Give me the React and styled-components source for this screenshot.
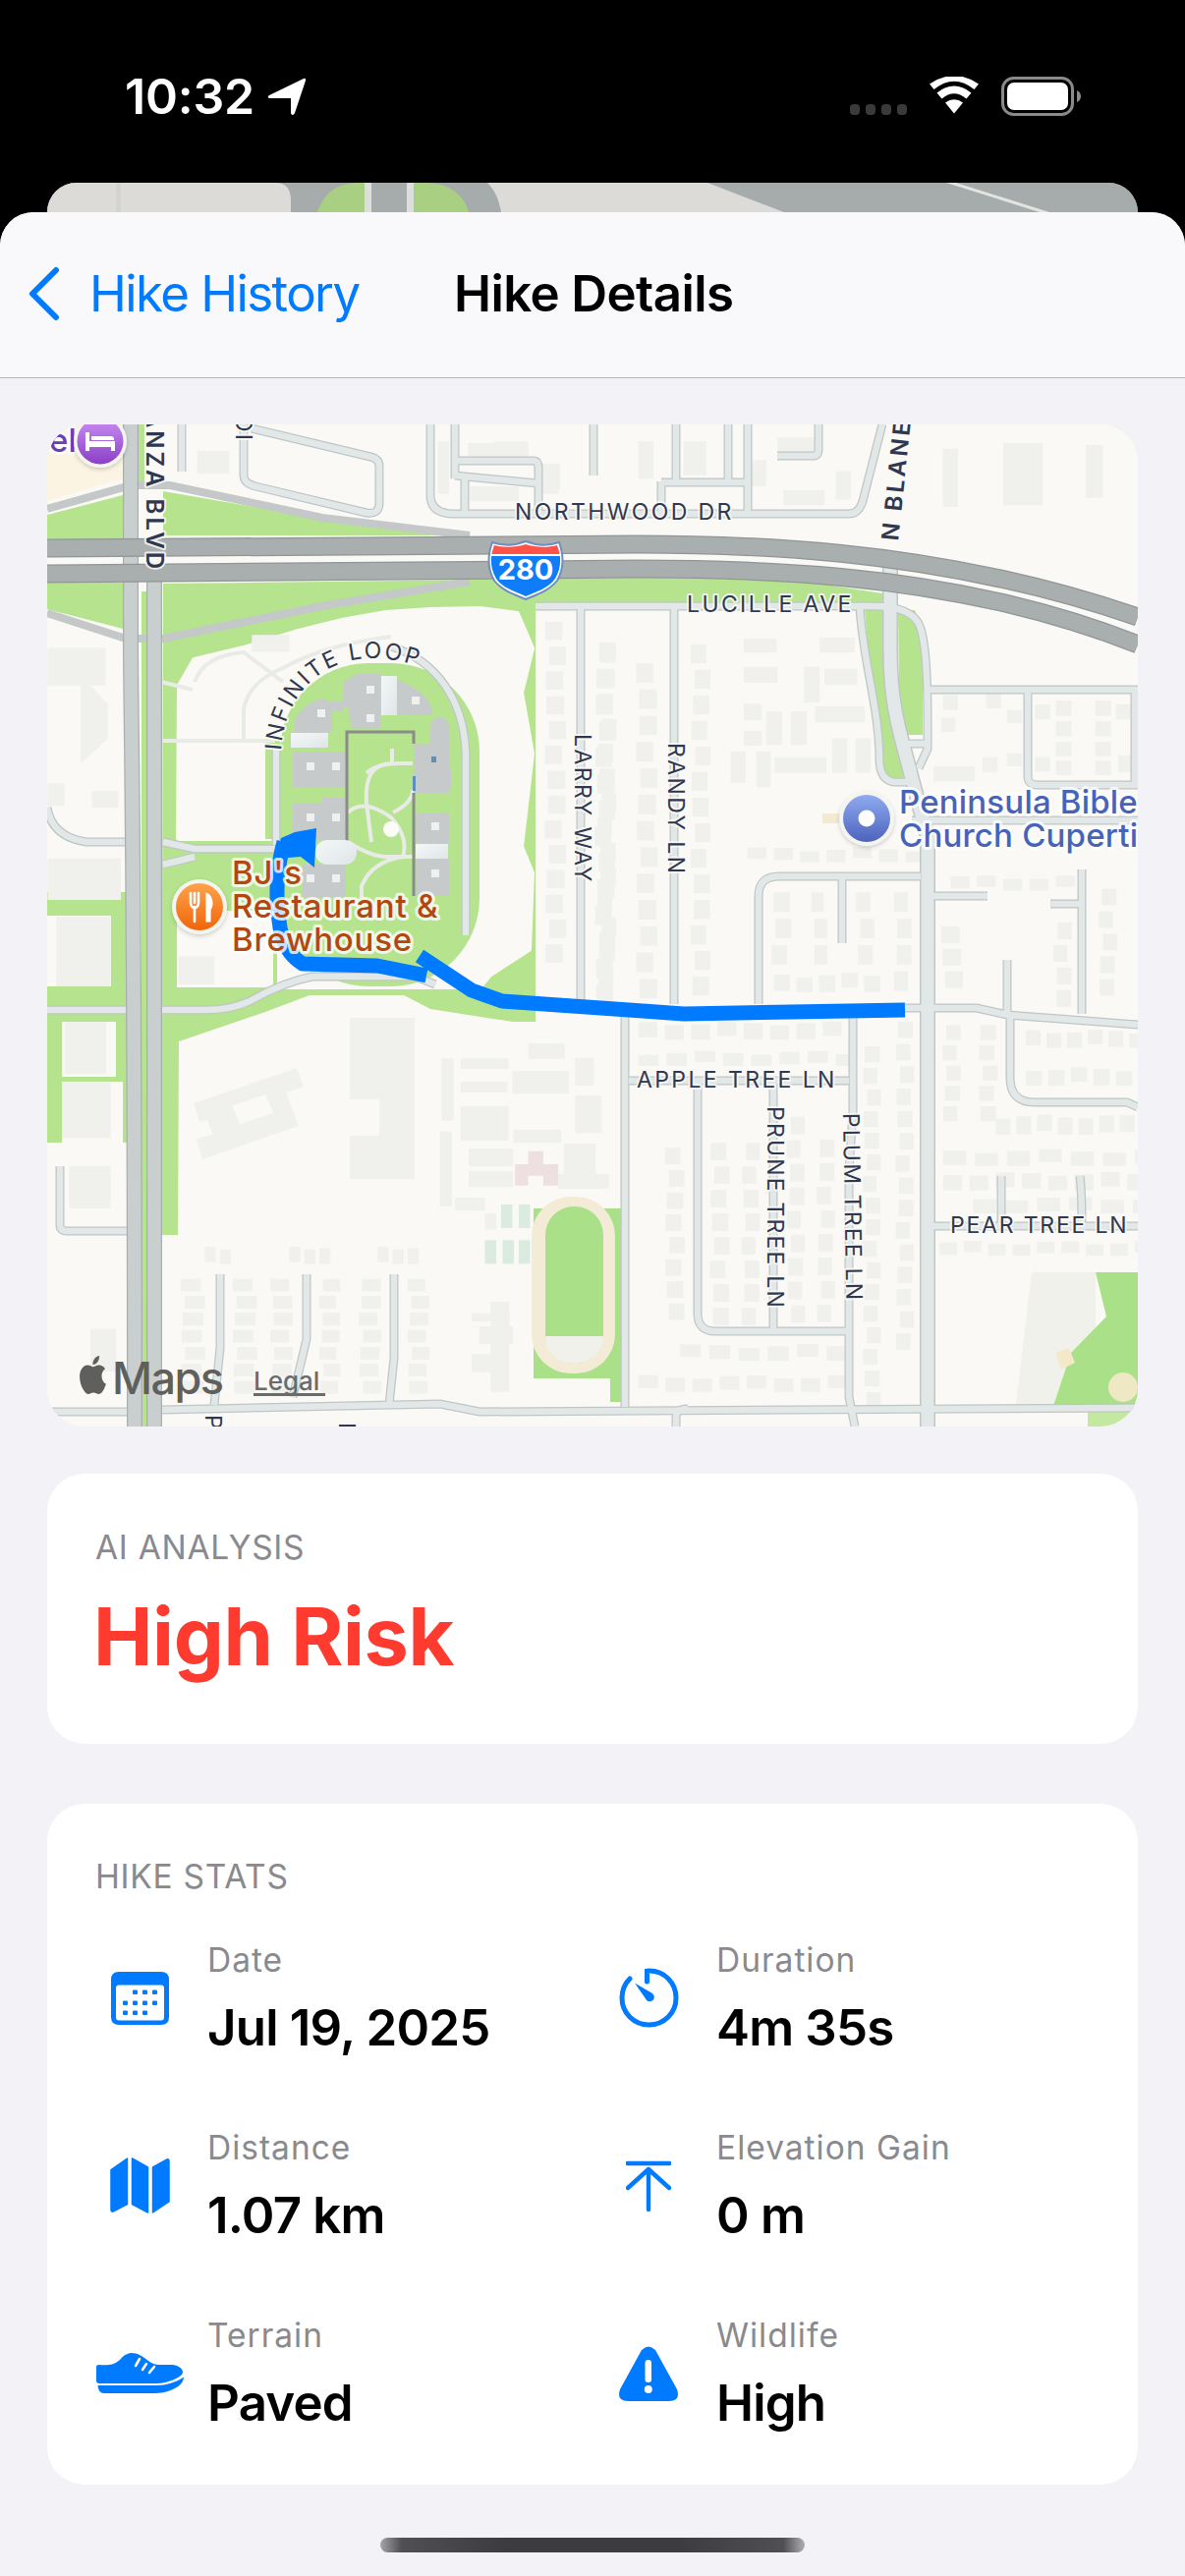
import React from "react"
import styled, { createGlobalStyle } from "styled-components"

const GlobalStyle = createGlobalStyle`
  html, body {
    margin: 0;
    padding: 0;
    background: #000;
  }
  * {
    box-sizing: border-box;
  }
`
const Screen = styled.div`
  width: 1206px;
  height: 2622px;
  overflow: hidden;
  background: #000;
  font-family: Inter, "Liberation Sans", sans-serif;
`
const StatusBar = styled.div`
  height: 186px;
  display: flex;
  align-items: flex-start;
  padding: 78px 106px 0 127px;
  color: #fff;
`
const Clock = styled.div`
  font-size: 50px;
  line-height: 40px;
  font-weight: 600;
  letter-spacing: -0.2px;
`
const StatusRight = styled.div`
  margin-left: auto;
  display: flex;
  align-items: flex-start;
`
const SignalDots = styled.div`
  display: flex;
  gap: 6px;
  margin-top: 28px;
  margin-right: 23px;
`
const SignalDot = styled.span`
  width: 10px;
  height: 11px;
  border-radius: 4px;
  background: #3a3a3c;
`
const Peek = styled.div`
  height: 30px;
  margin: 0 48px;
  border-radius: 30px 30px 0 0;
  overflow: hidden;
  background: #a6acac;
  svg {
    display: block;
  }
`
const Sheet = styled.div`
  height: 2406px;
  background: #f2f2f7;
  border-radius: 34px 34px 0 0;
  overflow: hidden;
  display: flex;
  flex-direction: column;
`
const NavBar = styled.div`
  height: 169px;
  flex-shrink: 0;
  display: flex;
  align-items: center;
  padding: 0 0 3px 28px;
  background: #f9f9fc;
  border-bottom: 1px solid #b3b3b8;
`
const BackLabel = styled.div`
  width: 371px;
  margin-left: 30px;
  font-size: 51px;
  line-height: 60px;
  letter-spacing: -1.6px;
  color: #007aff;
`
const NavTitle = styled.div`
  font-size: 51px;
  line-height: 60px;
  font-weight: 600;
  letter-spacing: -0.6px;
  color: #000;
`
const Content = styled.div`
  flex: 1;
  padding: 47px 48px 0;
  display: flex;
  flex-direction: column;
`
const MapFrame = styled.div`
  height: 1020px;
  border-radius: 38px;
  overflow: hidden;
  background: #faf9f5;
  svg {
    display: block;
  }
`
const Card = styled.div`
  margin-top: ${p => p.$top}px;
  height: ${p => p.$height}px;
  background: #fff;
  border-radius: 38px;
  padding: ${p => p.$pad}px 49px 0;
`
const SectionLabel = styled.div`
  font-size: 33.5px;
  line-height: 40px;
  letter-spacing: 0.7px;
  color: #8a8a8e;
`
const RiskText = styled.div`
  margin-top: 26px;
  margin-left: -2px;
  font-size: 81px;
  line-height: 90px;
  font-weight: 700;
  letter-spacing: -0.4px;
  color: #ff3b30;
`
const StatsGrid = styled.div`
  margin-top: 45px;
  display: grid;
  grid-template-columns: 1fr 1fr;
  column-gap: 24px;
  row-gap: 72px;
`
const Stat = styled.div`
  display: flex;
  align-items: center;
  gap: 24px;
`
const StatIcon = styled.div`
  width: 90px;
  flex-shrink: 0;
  display: flex;
  justify-content: center;
  margin-top: -2px;
  svg {
    display: block;
  }
`
const StatLabel = styled.div`
  font-size: 33.5px;
  line-height: 40px;
  letter-spacing: 1px;
  color: #8a8a8e;
`
const StatValue = styled.div`
  margin-top: 19px;
  font-size: 51px;
  line-height: 60px;
  font-weight: 600;
  letter-spacing: -0.8px;
  color: #000;
`
const HomeArea = styled.div`
  flex: 1;
  display: flex;
  justify-content: center;
  padding-top: 54px;
`
const HomeBar = styled.div`
  width: 432px;
  height: 15px;
  border-radius: 8px;
  background: linear-gradient(90deg, #a5a5a8 0%, #505053 5%, #3c3c3f 30%, #3c3c3f 70%, #505053 95%, #b0b0b3 100%);
`
const RoadLabel = styled.text`
  font-family: Inter, "Liberation Sans", sans-serif;
  font-size: ${p => p.$size || 23}px;
  font-weight: ${p => p.$weight || 400};
  letter-spacing: ${p => p.$track ?? 2.4}px;
  fill: #2f3850;
  paint-order: stroke;
  stroke: rgba(250, 249, 245, 0.85);
  stroke-width: 4px;
  stroke-linejoin: round;
`
const PoiLabel = styled.text`
  font-family: Inter, "Liberation Sans", sans-serif;
  font-size: 33px;
  font-weight: 500;
  letter-spacing: ${p => p.$track ?? 0.2}px;
  fill: ${p => p.$color};
  paint-order: stroke;
  stroke: rgba(255, 255, 255, 0.78);
  stroke-width: 6px;
  stroke-linejoin: round;
`
const ShieldNumber = styled.text`
  font-family: Inter, "Liberation Sans", sans-serif;
  font-size: 29px;
  font-weight: 700;
  fill: #fff;
  text-anchor: middle;
`
const MapsWord = styled.text`
  font-family: Inter, "Liberation Sans", sans-serif;
  font-size: 45px;
  font-weight: 500;
  letter-spacing: -1.6px;
  fill: #5f5f5d;
`
const LegalWord = styled.text`
  font-family: Inter, "Liberation Sans", sans-serif;
  font-size: 26px;
  font-weight: 500;
  fill: #6b6b69;
`

const BLUE = "#007aff"
const GREEN = "#b6e38d"
const CREAM = "#faf9f5"
const HOUSE = "#f0f0ed"

// map is drawn in its own 1110x1020 space, zoom grids below are just handy for tracing
const Z2 = "translate(-8,-2) scale(.3827)"
const Z3 = "translate(552,-2) scale(.3827)"
const Z4 = "translate(-8,568) scale(.3827,.3333)"
const Z5 = "translate(552,568) scale(.3827,.3333)"

const localRoads = [
  "M137 0V48",
  "M200 0V52Q200 60 212 63L325 90Q338 92 338 80V42Q338 34 325 32L208 4",
  "M390 0V72Q390 90 412 91H816Q826 91 830 78L850 0",
  "M415 0V55M415 37H495Q500 37 500 45V90M415 52L500 60M425 52V90",
  "M556 0V52M640 0V58M625 58V90M625 59H713M713 0V90M693 0V59M743 32H780Q785 32 785 26V0",
  "M497 185H840Q880 185 888 205Q896 225 896 300V330L887 350",
  "M827 186C830 240 847 290 847 340Q847 362 862 364H880",
  "M870 325H896",
  "M543 185V590M638 185V590",
  "M724 590V480Q724 460 745 460H889M809 460V528",
  "M896 270H1110M998 270V358Q998 367 1008 367H1110M1107 270V367",
  "M880 403H1110",
  "M896 480H957M1053 453V600M1021 488H1053M977 545V600",
  "M873 594H946L977 601L1110 611M980 601V665Q980 690 1005 690H1099L1110 695",
  "M592 668H816M588 600V1000M820 603V700L816 760V990L822 1020",
  "M662 668V905Q662 923 680 923H816M739 668V923",
  "M896 816H1110M971 765V816M1051 765C1053 780 1053 800 1053 816",
  "M0 1005H82M116 1003L400 997L440 1005L1110 1001",
  "M640 1020V1010Q640 1002 652 1002",
  "M176 865V940L170 998M264 865V931L250 990M353 865V950L348 998",
  "M13 755V815Q13 821 20 821H82",
  "M0 596H82M116 596H160Q190 596 210 585Q240 568 270 562H375L395 570",
  "M0 390Q5 420 40 425H82",
  "M118 425L150 432H236M118 448L150 440",
  "M426 520V340C426 280 395 240 350 226",
  "M233 328V428",
]

const campusPaths = [
  "M200 320V290Q205 262 240 248Q280 225 350 216",
  "M150 262Q160 235 200 232L240 262",
  "M118 322H232",
  "M116 262L148 270",
  "M351 330V345Q322 345 325 385Q328 410 330 425",
  "M372 345H360Q335 345 325 355",
  "M306 395Q322 380 350 400Q368 420 362 440Q330 445 320 470V482",
  "M306 425Q330 440 345 440H373",
  "M352 395Q372 385 372 372",
]

const buildings = [
  "M252 314V302Q258 284 282 279L290 284V314Z",
  "M302 262L315 254H339V310H310L306 288H302Z",
  "M356 260Q385 270 392 290V296H356Z",
  "M250 333H304V369H250Z",
  "M250 385H280V380H304V423H250Z",
  "M260 448H304V482H260Z",
  "M373 325H390V310Q390 298 400 298Q409 298 409 310V345Q414 360 409 375H373Z",
  "M375 396H409V427H375Z",
  "M375 442H409V480H375Z",
  "M290 282H302V292H290Z",
]

const courtyards = [
  [275, 290], [325, 266], [325, 295], [371, 277], [264, 344], [290, 344], [264, 396], [290, 396],
  [264, 458], [290, 458], [391, 405], [391, 453],
]

const glassPanels = [
  [340, 256, 16, 40, 0],
  [248, 314, 38, 15, 0],
  [273, 423, 42, 25, 12],
  [375, 427, 33, 15, 0],
]

// row of houses along a street, slightly uneven so it does not look like a table
const houseColumn = (x, w, from, to, pitch) => {
  const out = []
  let i = 0
  for (let y = from; y < to; y += pitch) {
    const wob = Math.sin(i * 2.3 + x) * 6
    out.push([x + wob, y, w - Math.abs(wob) / 2, pitch * 0.74])
    i++
  }
  return out
}
const houseRow = (y, h, from, to, pitch) => {
  const out = []
  let i = 0
  for (let x = from; x < to; x += pitch) {
    const wob = Math.sin(i * 1.7 + y) * 6
    out.push([x, y + wob, pitch * 0.72, h - Math.abs(wob)])
    i++
  }
  return out
}

const z2Blocks = [
  [420, 75, 85, 60], [1060, 50, 30, 140], [1145, 170, 130, 40], [1210, 50, 90, 40], [1330, 110, 50, 80],
  [1140, 55, 100, 35], [22, 600, 155, 100], [22, 960, 45, 60], [140, 980, 70, 45], [22, 1160, 195, 110],
  [45, 1315, 145, 185], [370, 1420, 95, 75], [565, 565, 100, 45], [1345, 110, 40, 70],
  ...houseColumn(1350, 48, 530, 1400, 66),
  ...houseColumn(1490, 42, 590, 1500, 66),
]
const z3Blocks = [
  [410, 575, 88, 37], [612, 572, 93, 40], [410, 650, 90, 42], [570, 650, 42, 95], [625, 655, 87, 43],
  [410, 748, 48, 44], [470, 768, 42, 90], [535, 768, 43, 90], [600, 755, 132, 43], [410, 820, 48, 40],
  [375, 875, 40, 83], [443, 875, 39, 95], [492, 890, 138, 42], [645, 840, 40, 92], [707, 840, 41, 92],
  [940, 70, 40, 155], [1100, 55, 105, 165], [1320, 60, 45, 140], [500, 40, 110, 45], [515, 180, 110, 40],
  [130, 50, 40, 100], [250, 50, 60, 90], [655, 130, 40, 75], [430, 100, 40, 70],
  [940, 725, 40, 40], [1055, 720, 40, 40], [1110, 765, 40, 35], [935, 785, 38, 38], [1185, 750, 40, 40],
  [1240, 740, 42, 40], [1345, 740, 42, 40], [1400, 750, 45, 40], [1240, 795, 42, 40], [1345, 795, 42, 40],
  [1240, 850, 42, 38], [1345, 850, 42, 38], [1185, 890, 40, 38], [1240, 900, 42, 38], [1345, 900, 42, 38],
  [1405, 885, 40, 45], [915, 915, 110, 40], [1045, 890, 40, 40], [1110, 880, 40, 35],
  ...houseColumn(20, 46, 585, 1530, 70),
  ...houseColumn(130, 48, 640, 1530, 70),
  ...houseColumn(275, 44, 590, 1510, 68),
  ...houseColumn(490, 44, 1250, 1400, 70),
  ...houseColumn(595, 36, 1250, 1400, 70),
  ...houseColumn(715, 40, 1250, 1400, 70),
  ...houseColumn(815, 40, 1250, 1520, 70),
  ...houseColumn(940, 50, 1340, 1520, 60),
  ...houseColumn(1240, 40, 1330, 1530, 60),
  ...houseColumn(1360, 40, 1240, 1530, 60),
  ...houseRow(1135, 35, 420, 860, 70),
  ...houseRow(1470, 45, 490, 760, 60),
  ...houseRow(1210, 35, 960, 1300, 70),
]
const z4Blocks = [
  [68, 120, 110, 160], [60, 305, 130, 170], [80, 560, 110, 130], [136, 1058, 68, 130],
  [1070, 232, 32, 190], [1120, 232, 128, 32], [1120, 303, 125, 33], [1258, 270, 150, 70], [1300, 186, 98, 48],
  [1120, 378, 128, 105], [1260, 450, 128, 40], [1065, 455, 32, 230], [1105, 657, 80, 40], [1142, 507, 118, 55],
  [1142, 577, 118, 48], [1395, 492, 85, 100], [1380, 585, 135, 45], [1425, 345, 70, 115], [1185, 705, 30, 50],
  [1150, 1135, 50, 55], [1200, 975, 50, 275], [1150, 1010, 100, 25], [1170, 1050, 90, 55], [1425, 230, 50, 85],
  ...houseColumn(382, 56, 905, 1255, 52),
  ...houseColumn(520, 56, 905, 1255, 52),
  ...houseColumn(620, 52, 905, 1255, 52),
  ...houseColumn(750, 48, 905, 1255, 52),
  ...houseColumn(855, 52, 905, 1255, 52),
  ...houseColumn(985, 50, 905, 1255, 52),
  ...houseRow(810, 50, 440, 520, 40),
  ...houseRow(810, 50, 665, 755, 40),
  ...houseRow(810, 50, 900, 985, 40),
]
const z5Blocks = [
  ...houseColumn(206, 44, 505, 1040, 68),
  ...houseColumn(326, 44, 490, 1020, 72),
  ...houseColumn(410, 40, 490, 1020, 72),
  ...houseColumn(530, 40, 410, 1020, 72),
  ...houseColumn(610, 40, 480, 1020, 72),
  ...houseColumn(732, 40, 195, 1270, 66),
  ...houseColumn(820, 40, 120, 1130, 68),
  ...houseColumn(945, 40, 130, 380, 62),
  ...houseColumn(1040, 42, 130, 380, 62),
  ...houseRow(125, 50, 130, 660, 70),
  ...houseRow(215, 40, 130, 660, 75),
  ...houseRow(1110, 45, 240, 660, 78),
  ...houseRow(1205, 45, 130, 660, 72),
  ...houseRow(150, 50, 1160, 1457, 55),
  ...houseRow(265, 50, 1160, 1457, 60),
  ...houseRow(410, 55, 1080, 1457, 55),
  ...houseRow(515, 45, 940, 1457, 85),
  ...houseRow(585, 50, 940, 1457, 70),
  ...houseRow(660, 45, 1020, 1457, 85),
  ...houseRow(795, 40, 930, 1457, 65),
]

const Blocks = ({ transform, items }) => (
  <g transform={transform} fill={HOUSE}>
    {items.map(([x, y, w, h], i) => (
      <rect key={i} x={x} y={y} width={w} height={h} />
    ))}
  </g>
)

const MapDrawing = () => (
  <svg width="1110" height="1020" viewBox="0 0 1110 1020">
    <defs>
      <linearGradient id="poiOrange" x1="0" y1="0" x2="0" y2="1">
        <stop offset="0" stopColor="#ffa24a" />
        <stop offset="1" stopColor="#f0650c" />
      </linearGradient>
      <linearGradient id="poiPurple" x1="0" y1="0" x2="0" y2="1">
        <stop offset="0" stopColor="#cb8ff2" />
        <stop offset="1" stopColor="#8a3fc6" />
      </linearGradient>
      <linearGradient id="poiBlue" x1="0" y1="0" x2="0" y2="1">
        <stop offset="0" stopColor="#8fabf0" />
        <stop offset="1" stopColor="#4d62bb" />
      </linearGradient>
      <linearGradient id="glass" x1="0" y1="0" x2="1" y2="1">
        <stop offset="0" stopColor="#f4f7f8" />
        <stop offset="1" stopColor="#dfe6e8" />
      </linearGradient>
      <filter id="poiShadow" x="-30%" y="-30%" width="160%" height="160%">
        <feDropShadow dx="0" dy="2" stdDeviation="2" floodColor="#000" floodOpacity=".18" />
      </filter>
      <clipPath id="shieldInner">
        <path d="M6 6C17 9 28 8 38 5C48 8 59 9 70 6C74 16 75 28 68 40C61 50 49 53 38 58C27 53 15 50 8 40C1 28 2 16 6 6Z" />
      </clipPath>
      <path id="loopArc" d="M238 332C242 270 285 238 330 238C345 238 360 240 380 247" />
    </defs>

    <rect width="1110" height="1020" fill={CREAM} />

    {/* tan parcel top left */}
    <path d="M0 0H77V55L0 78Z" fill="#fbf4e2" />

    {/* parks */}
    <g fill={GREEN}>
      <path d="M0 92L77 72V117H0Z" />
      <rect x="92" y="0" width="7" height="62" />
      <path d="M118 68L280 96L420 113H118Z" />
      <path d="M0 161H77V208L0 188Z" />
      <path d="M118 162L600 156L760 158L850 172V183H497V608H474L390 595L363 581H267L222 598L134 628L133 825H116Z" />
      <path d="M0 476H82V731H0Z" />
      <path d="M0 568H82V600H0Z" />
      <rect x="96" y="170" width="6" height="850" />
    </g>
    <g fill={CREAM}>
      <path d="M0 500H65V572H0Z" />
      <rect x="15" y="608" width="55" height="56" />
      <rect x="15" y="669" width="62" height="62" />
      <rect x="0" y="731" width="82" height="290" />
    </g>

    {/* campus ground */}
    <path
      d="M135 266L150 240L200 228L252 212L300 200L345 192L390 189L440 188L478 193L493 228L482 273L493 335L482 430L493 457L490 534L450 560L440 572H237V421H134Z"
      fill={CREAM}
      stroke={CREAM}
      strokeWidth="6"
      strokeLinejoin="round"
    />
    <rect x="237" y="243" width="203" height="329" rx="90" fill={GREEN} />
    <rect x="132" y="495" width="98" height="78" fill={CREAM} />
    <rect x="134" y="323" width="84" height="98" rx="6" fill={CREAM} />
    <rect x="222" y="322" width="15" height="100" fill={GREEN} />

    {/* green by the N Blaney split */}
    <path d="M832 189H851V243L858 293L872 360L852 362L843 316Z" fill={GREEN} />
    <path d="M866 189H883L891 212V316H873L867 266Z" fill={GREEN} />

    {/* park corner, track */}
    <path d="M1002 863H1067V1005H985Z" fill="#f1f1ec" />
    <path d="M1067 863H1110V1005H1022L1042 945L1078 908Z" fill="#a9e088" />
    <path d="M1059 1005H1110V1020H1059Z" fill="#c3e8a0" />
    <circle cx="1095" cy="980" r="15" fill="#efe8c4" />
    <path d="M1026 945L1040 940L1046 955L1032 962Z" fill="#f3e8c8" />
    <rect x="495" y="798" width="89" height="197" fill="#a9e088" />
    <rect x="495" y="971" width="78" height="26" fill={CREAM} />
    <rect x="493" y="786" width="85" height="180" rx="40" fill="#f4ebd7" />
    <rect x="507" y="796" width="59" height="160" rx="29" fill="#a9e088" />
    <path d="M507 928H566C566 945 552 956 536 956C520 956 507 945 507 928Z" fill="#f1f1ec" />

    {/* block footprints */}
    <Blocks transform={Z2} items={z2Blocks} />
    <Blocks transform={Z3} items={z3Blocks} />
    <Blocks transform={Z4} items={z4Blocks} />
    <Blocks transform={Z5} items={z5Blocks} />
    <g fill={HOUSE}>
      <path d="M308 604H374V768H308V724H338V687H308Z" />
      <path d="M149 691L254 655L261 674L243 680L256 714L158 748L152 727L169 723L163 708L155 710Z" />
      <path d="M34 255L62 285L62 320L34 345L34 320L34 280Z" />
    </g>
    <g transform={Z4}>
      <rect x="520" y="358" width="95" height="60" fill={CREAM} transform="rotate(-21 567 388)" />
      <path d="M1265 555H1300V515H1340V555H1380V620H1340V590H1300V620H1265Z" fill="#eee0e0" />
      {[[1228, 678], [1275, 678], [1185, 787], [1232, 787], [1275, 787]].map(([x, y]) => (
        <rect key={x + "-" + y} x={x} y={y} width="30" height="72" fill="#dcebdf" />
      ))}
    </g>

    {/* streets */}
    <g fill="none" stroke="#bfc6c6" strokeWidth="9">
      {localRoads.map(d => (
        <path key={d} d={d} />
      ))}
      <path d="M858 130V230C858 290 870 320 880 360L896 420V1020" strokeWidth="16" />
    </g>
    <g fill="none" stroke="#e2e7e7" strokeWidth="6.5">
      {localRoads.map(d => (
        <path key={d} d={d} />
      ))}
      <path d="M858 130V230C858 290 870 320 880 360L896 420V1020" strokeWidth="13" />
    </g>
    <g fill="none" stroke="#e9ebe7" strokeWidth="4">
      {campusPaths.map(d => (
        <path key={d} d={d} />
      ))}
    </g>

    {/* side arterials and ramps */}
    <g fill="none" stroke="#c4c8c8" strokeWidth="8">
      <path d="M0 86L85 62H125L280 95L430 113" />
      <path d="M0 192L80 218H118L280 185L430 160" />
    </g>
    <g fill="none" stroke="#a9afaf" strokeWidth="16">
      <path d="M85 0V220C85 300 89 400 89 1020" />
      <path d="M109 160V1020" />
    </g>
    <g fill="none" stroke="#c9cfcf" strokeWidth="13.5">
      <path d="M85 0V220C85 300 89 400 89 1020" />
      <path d="M109 160V1020" />
    </g>

    {/* freeway */}
    <g fill="none" stroke="#909696" strokeWidth="19">
      <path d="M0 126L600 122C760 122 870 135 975 158C1030 170 1075 184 1110 196" />
      <path d="M0 152L600 147C760 147 870 158 975 182C1030 195 1075 210 1110 224" />
    </g>
    <g fill="none" stroke="#a9aeae" strokeWidth="16.5">
      <path d="M0 126L600 122C760 122 870 135 975 158C1030 170 1075 184 1110 196" />
      <path d="M0 152L600 147C760 147 870 158 975 182C1030 195 1075 210 1110 224" />
    </g>

    {/* campus buildings */}
    <g fill="#c6cacb">
      {buildings.map(d => (
        <path key={d} d={d} />
      ))}
    </g>
    <path d="M305 426V313H373V325M373 375V480" fill="none" stroke="#8a8c8c" strokeWidth="3" />
    <g fill="#eff1f1">
      {courtyards.map(([x, y]) => (
        <rect key={x + "-" + y} x={x} y={y} width="8" height="8" />
      ))}
    </g>
    <g fill="url(#glass)">
      {glassPanels.map(([x, y, w, h, r]) => (
        <rect key={x} x={x} y={y} width={w} height={h} rx={r} />
      ))}
    </g>
    <rect x="391" y="338" width="5" height="6" fill="#5f8dbd" />
    <rect x="372" y="358" width="3" height="15" fill="#5f8dbd" />
    <circle cx="350" cy="412" r="8" fill="#fbfbf8" />

    {/* route */}
    <path d="M233 442L238 421L252 415L274 411L272 451L258 440Z" fill={BLUE} />
    <path
      d="M241 425C234 450 232 480 236 505C238 525 245 540 260 549L336 551L386 561M379 541L432 576L463 587L592 596L648 600L873 596"
      fill="none"
      stroke={BLUE}
      strokeWidth="15"
      strokeLinejoin="round"
    />

    {/* road names */}
    <RoadLabel x="476" y="97">NORTHWOOD DR</RoadLabel>
    <RoadLabel x="651" y="191">LUCILLE AVE</RoadLabel>
    <RoadLabel x="600" y="675">APPLE TREE LN</RoadLabel>
    <RoadLabel x="919" y="823" $track={1.8}>PEAR TREE LN</RoadLabel>
    <RoadLabel transform="translate(733 694) rotate(90)" $track={2.2}>PRUNE TREE LN</RoadLabel>
    <RoadLabel transform="translate(810 701) rotate(89)" $track={2.2}>PLUM TREE LN</RoadLabel>
    <RoadLabel transform="translate(632 324) rotate(90)">RANDY LN</RoadLabel>
    <RoadLabel transform="translate(537 315) rotate(90)">LARRY WAY</RoadLabel>
    <RoadLabel transform="translate(866 119) rotate(-84)" $weight={600} $size={24} $track={3}>N BLANEY AVE</RoadLabel>
    <RoadLabel transform="translate(101 150) rotate(90)" textAnchor="end" $weight={600} $size={24} $track={3}>DE ANZA BLVD</RoadLabel>
    <RoadLabel transform="translate(209 16) rotate(-90)">IO</RoadLabel>
    <RoadLabel transform="translate(161 1008) rotate(90)">P</RoadLabel>
    <RoadLabel transform="translate(297 1016) rotate(90)">F</RoadLabel>
    <RoadLabel>
      <textPath href="#loopArc">INFINITE LOOP</textPath>
    </RoadLabel>

    {/* 280 shield */}
    <g transform="translate(449 117)">
      <path
        d="M4 3C16 7 28 6 38 2C48 6 60 7 72 3C76 14 78 28 70 42C62 52 50 56 38 61C26 56 14 52 6 42C-2 28 0 14 4 3Z"
        fill="#fff"
        stroke="#6e8ec2"
        strokeWidth="2"
      />
      <g clipPath="url(#shieldInner)">
        <rect width="76" height="15" fill="#ff5349" />
        <rect y="17" width="76" height="46" fill="#0e7df7" />
      </g>
      <ShieldNumber x="38" y="41">280</ShieldNumber>
    </g>

    {/* places */}
    <PoiLabel x="2" y="28" $color="#6a3fb5">el</PoiLabel>
    <g filter="url(#poiShadow)">
      <circle cx="54" cy="17" r="27" fill="#f4f4f1" />
      <circle cx="54" cy="17" r="23.5" fill="url(#poiPurple)" />
    </g>
    <path d="M39 8H43V17H69V27H65V23H43V27H39ZM45 12H65Q68 12 68 15V16H45Z" fill="#fff" />

    <g filter="url(#poiShadow)">
      <circle cx="155" cy="491" r="28" fill="#f4f4f1" />
      <circle cx="155" cy="491" r="24" fill="url(#poiOrange)" />
    </g>
    <path
      d="M146 477V487M150 477V487M154 477V487M146 486Q146 492 150 492Q154 492 154 486M150 491V506"
      fill="none"
      stroke="#fff"
      strokeWidth="2.6"
      strokeLinecap="round"
    />
    <path d="M162 477C169 480 169 490 166 494V506H162Z" fill="#fff" stroke="#fff" strokeWidth="1.2" strokeLinejoin="round" />

    <PoiLabel x="188" y="468" $color="#b3470f" $track={0.8}>BJ's</PoiLabel>
    <PoiLabel x="188" y="502" $color="#b3470f" $track={0.8}>Restaurant &amp;</PoiLabel>
    <PoiLabel x="188" y="536" $color="#b3470f" $track={0.8}>Brewhouse</PoiLabel>

    <rect x="789" y="396" width="20" height="10" fill="#f4ead2" />
    <g filter="url(#poiShadow)">
      <circle cx="834" cy="401" r="28" fill="#f4f4f1" />
      <circle cx="834" cy="401" r="24" fill="url(#poiBlue)" />
    </g>
    <circle cx="834" cy="401" r="8.5" fill="#fff" />
    <PoiLabel x="867" y="396" $color="#4763b8">Peninsula Bible</PoiLabel>
    <PoiLabel x="867" y="430" $color="#4763b8">Church Cupertino</PoiLabel>

    {/* attribution */}
    <svg x="30" y="948" width="33" height="39" viewBox="0 0 24 24" preserveAspectRatio="none">
      <path
        fill="#5f5f5d"
        d="M12.152 6.896c-.948 0-2.415-1.078-3.96-1.04-2.04.027-3.91 1.183-4.961 3.014-2.117 3.675-.546 9.103 1.519 12.09 1.013 1.454 2.208 3.09 3.792 3.039 1.52-.065 2.09-.987 3.935-.987 1.831 0 2.35.987 3.96.948 1.637-.026 2.676-1.48 3.676-2.948 1.156-1.688 1.636-3.325 1.662-3.415-.039-.013-3.182-1.221-3.22-4.857-.026-3.04 2.48-4.494 2.597-4.559-1.429-2.09-3.623-2.324-4.39-2.376-2-.156-3.675 1.09-4.61 1.09zM15.53 3.83c.843-1.012 1.4-2.427 1.245-3.83-1.207.052-2.662.805-3.532 1.818-.78.896-1.454 2.338-1.273 3.714 1.338.104 2.715-.688 3.559-1.701"
      />
    </svg>
    <MapsWord x="66" y="987">Maps</MapsWord>
    <LegalWord x="210" y="983">Legal</LegalWord>
    <rect x="210" y="986" width="73" height="3" fill="#6b6b69" />
  </svg>
)

const PeekDrawing = () => (
  <svg width="1110" height="30" viewBox="0 0 1110 30">
    <rect width="1110" height="30" fill="#a6acac" />
    <path d="M0 0H232Q248 0 248 18V30H0Z" fill="#dcdbd7" />
    <rect x="70" width="5" height="30" fill="#d3d3cf" />
    <path d="M275 30C282 10 295 0 318 0H385C410 0 425 14 429 30Z" fill="#a8cf82" />
    <rect x="323" width="7" height="30" fill="#dcdfdc" />
    <rect x="366" width="7" height="30" fill="#dcdfdc" />
    <path d="M330 0H366V30H330Z" fill="#a6acac" />
    <path d="M448 0H672L750 30H462C460 18 456 8 448 0Z" fill="#dcdbd7" />
    <path d="M925 0L1020 30H1010L915 0Z" fill="#e3e4e0" />
  </svg>
)

const LocationArrow = () => (
  <svg width="40" height="39" viewBox="0 0 40 39" style={{ marginLeft: 13, marginTop: 1 }}>
    <path d="M37 1C38.5 .3 39.5 1.3 39 3L28 36C27 38.5 24.5 38.5 24 36V21H3C.5 21 0 19 2 18Z" fill="#fff" />
  </svg>
)

const Wifi = () => (
  <svg width="50" height="38" viewBox="0 0 50 38">
    <path d="M25 37.5L16 26.5Q25 20 34 26.5Z" fill="#fff" />
    <path d="M12.5 22.5Q25 12 37.5 22.5L42.5 16.5Q25 2.5 7.5 16.5Z" fill="#fff" />
    <path d="M4.5 13Q25 -3.5 45.5 13L50 7.5Q25 -9.5 0 7.5Z" fill="#fff" />
  </svg>
)

const Battery = () => (
  <svg width="81" height="40" viewBox="0 0 81 40" style={{ marginLeft: 23 }}>
    <rect x="1.5" y="1.5" width="71" height="37" rx="11" fill="none" stroke="#8a8a8c" strokeWidth="3" />
    <rect x="6" y="6" width="62" height="28" rx="7" fill="#fff" />
    <path d="M77 14Q81 16 81 20Q81 24 77 26Z" fill="#8a8a8c" />
  </svg>
)

const BackChevron = () => (
  <svg width="33" height="56" viewBox="0 0 33 56">
    <path d="M29 4L5 28L29 52" fill="none" stroke={BLUE} strokeWidth="6" strokeLinecap="round" strokeLinejoin="round" />
  </svg>
)

const CalendarIcon = () => (
  <svg width="59" height="54" viewBox="0 0 59 54">
    <path
      fillRule="evenodd"
      d="M8 0H51Q59 0 59 8V46Q59 54 51 54H8Q0 54 0 46V8Q0 0 8 0ZM8 13.5Q5 13.5 5 16.5V46Q5 49.5 8 49.5H51Q54 49.5 54 46V16.5Q54 13.5 51 13.5Z"
      fill={BLUE}
    />
    {[
      [22, 18.5], [32, 18.5], [42, 18.5],
      [12, 29.5], [22, 29.5], [32, 29.5], [42, 29.5],
      [12, 39.5], [22, 39.5], [32, 39.5],
    ].map(([x, y]) => (
      <rect key={x + "-" + y} x={x} y={y} width="5" height="4.4" rx="1" fill={BLUE} />
    ))}
  </svg>
)

const MapIcon = () => (
  <svg width="61" height="57" viewBox="0 0 61 57">
    <g fill={BLUE} stroke={BLUE} strokeWidth="1.5" strokeLinejoin="round">
      <path d="M1 12.5L17.5 1V47.5L3 55Q1 55.5 1 53Z" />
      <path d="M22.5 1L38.5 10V56L22.5 47.5Z" />
      <path d="M43.5 10L58 2Q60 1 60 4V45L43.5 56Z" />
    </g>
  </svg>
)

const ShoeIcon = () => (
  <svg width="89" height="41" viewBox="0 0 89 41">
    <path
      d="M0 14Q0 12 3 12C12 13 18 12 24 7C28 2 32 0 36 0C42 0 47 3 53 8Q58 12 64 12H78C84 13 88 16 88 19.5Q88 22 83 25C76 29 68 31 60 31H3Q0 31 0 28Z"
      fill={BLUE}
    />
    <path d="M1.5 33H61C71 33 81 30 89 24.5C88.5 30 86 33 78 37C71 40 65 41 59 41H8C4 41 2 38 1.5 33Z" fill={BLUE} />
    <path d="M40 13L44 6M47 17L51 11M54 20L59 14" stroke="#fff" strokeWidth="2.6" strokeLinecap="round" fill="none" />
  </svg>
)

const TimerIcon = () => (
  <svg width="61" height="61" viewBox="0 0 61 61">
    <path
      d="M28.5 14V3.2C30 3 30.5 3 31 3C46 3 58 15 58 30.5C58 46 46 58 30.5 58C15 58 3 46 3 30.5C3 23 6 16 11 11"
      fill="none"
      stroke={BLUE}
      strokeWidth="5"
      strokeLinecap="round"
    />
    <path d="M16 15.5L34 26Q37 29 35 32.5Q32 35.5 28.5 33.5Z" fill={BLUE} />
  </svg>
)

const ArrowUpIcon = () => (
  <svg width="46" height="52" viewBox="0 0 46 52">
    <path d="M1.5 3H44.5M2 28L23 9L44 28M23 9V50" fill="none" stroke={BLUE} strokeWidth="4.4" strokeLinecap="round" strokeLinejoin="round" />
  </svg>
)

const WarningIcon = () => (
  <svg width="62" height="56" viewBox="0 0 62 56">
    <path d="M24 4Q31 -3 38 4L60 44Q64 56 52 56H10Q-2 56 2 44Z" fill={BLUE} />
    <rect x="27.5" y="14" width="6.5" height="23" rx="3" fill="#fff" />
    <circle cx="30.8" cy="44" r="4" fill="#fff" />
  </svg>
)

const stats = [
  { label: "Date", value: "Jul 19, 2025", Icon: CalendarIcon },
  { label: "Duration", value: "4m 35s", Icon: TimerIcon },
  { label: "Distance", value: "1.07 km", Icon: MapIcon },
  { label: "Elevation Gain", value: "0 m", Icon: ArrowUpIcon },
  { label: "Terrain", value: "Paved", Icon: ShoeIcon },
  { label: "Wildlife", value: "High", Icon: WarningIcon },
]

const App = () => {
  return (
    <Screen>
      <GlobalStyle />
      <StatusBar>
        <Clock>10:32</Clock>
        <LocationArrow />
        <StatusRight>
          <SignalDots>
            <SignalDot />
            <SignalDot />
            <SignalDot />
            <SignalDot />
          </SignalDots>
          <Wifi />
          <Battery />
        </StatusRight>
      </StatusBar>
      <Peek>
        <PeekDrawing />
      </Peek>
      <Sheet>
        <NavBar>
          <BackChevron />
          <BackLabel>Hike History</BackLabel>
          <NavTitle>Hike Details</NavTitle>
        </NavBar>
        <Content>
          <MapFrame>
            <MapDrawing />
          </MapFrame>
          <Card $top={48} $height={275} $pad={55}>
            <SectionLabel>AI ANALYSIS</SectionLabel>
            <RiskText>High Risk</RiskText>
          </Card>
          <Card $top={61} $height={693} $pad={54}>
            <SectionLabel>HIKE STATS</SectionLabel>
            <StatsGrid>
              {stats.map(({ label, value, Icon }) => (
                <Stat key={label}>
                  <StatIcon>
                    <Icon />
                  </StatIcon>
                  <div>
                    <StatLabel>{label}</StatLabel>
                    <StatValue>{value}</StatValue>
                  </div>
                </Stat>
              ))}
            </StatsGrid>
          </Card>
          <HomeArea>
            <HomeBar />
          </HomeArea>
        </Content>
      </Sheet>
    </Screen>
  )
}

export default App
